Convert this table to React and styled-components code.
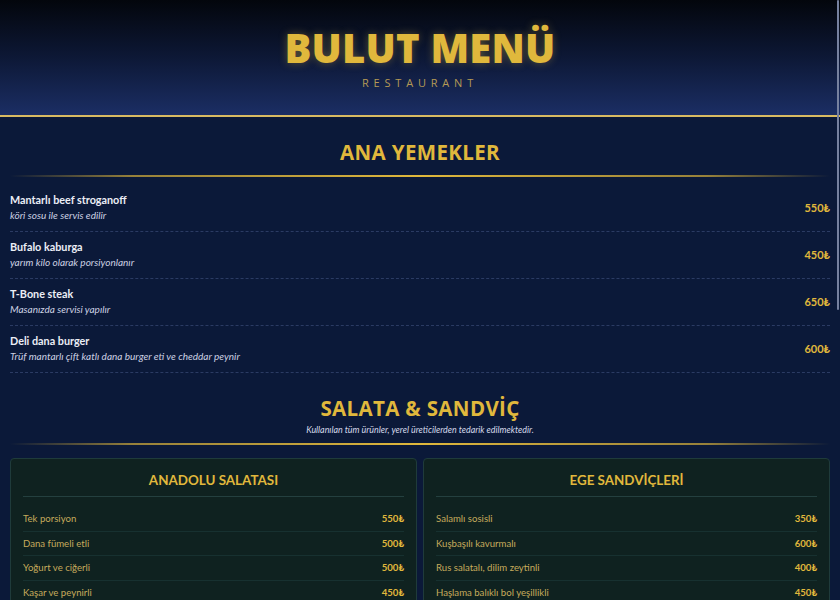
import React from 'react';
import styled, { createGlobalStyle } from 'styled-components';

const GlobalStyle = createGlobalStyle`
    html, body {
        margin: 0;
        padding: 0;
        background: #0b1939;
    }
    html { overflow: hidden; }
    * { box-sizing: border-box; }
`

const mains = [
    { name: 'Mantarlı beef stroganoff', desc: 'köri sosu ile servis edilir', price: '550₺' },
    { name: 'Bufalo kaburga', desc: 'yarım kilo olarak porsiyonlanır', price: '450₺' },
    { name: 'T-Bone steak', desc: 'Masanızda servisi yapılır', price: '650₺' },
    { name: 'Deli dana burger', desc: 'Trüf mantarlı çift katlı dana burger eti ve cheddar peynir', price: '600₺' },
];

const cards = [
    {
        title: 'ANADOLU SALATASI',
        rows: [
            ['Tek porsiyon', '550₺'],
            ['Dana fümeli etli', '500₺'],
            ['Yoğurt ve ciğerli', '500₺'],
            ['Kaşar ve peynirli', '450₺'],
            ['Ton balıklı', '550₺'],
        ],
    },
    {
        title: 'EGE SANDVİÇLERİ',
        rows: [
            ['Salamlı sosisli', '350₺'],
            ['Kuşbaşılı kavurmalı', '600₺'],
            ['Rus salatalı, dilim zeytinli', '400₺'],
            ['Haşlama balıklı bol yeşillikli', '450₺'],
            ['Hindi füme ve cheddarlı', '400₺'],
        ],
    },
];

function App() {
    return (
        <React.Fragment>
            <GlobalStyle />
            <Page>
                <Header>
                    <Logo>BULUT MENÜ</Logo>
                    <Tagline>RESTAURANT</Tagline>
                </Header>
                <Main>
                    <Section>
                        <SectionTitle>ANA YEMEKLER</SectionTitle>
                        <GoldLine />
                        <ItemList>
                            {mains.map((m) => (
                                <Item key={m.name}>
                                    <ItemText>
                                        <ItemName>{m.name}</ItemName>
                                        <ItemDesc>{m.desc}</ItemDesc>
                                    </ItemText>
                                    <Price>{m.price}</Price>
                                </Item>
                            ))}
                        </ItemList>
                    </Section>
                    <Section>
                        <SectionTitle>SALATA &amp; SANDVİÇ</SectionTitle>
                        <SectionNote>Kullanılan tüm ürünler, yerel üreticilerden tedarik edilmektedir.</SectionNote>
                        <GoldLine />
                        <CardGrid>
                            {cards.map((c) => (
                                <Card key={c.title}>
                                    <CardTitle>{c.title}</CardTitle>
                                    {c.rows.map(([n, p]) => (
                                        <CardRow key={n}>
                                            <span>{n}</span>
                                            <CardPrice>{p}</CardPrice>
                                        </CardRow>
                                    ))}
                                </Card>
                            ))}
                        </CardGrid>
                    </Section>
                    <Footer>Afiyet olsun · Bulut Menü</Footer>
                </Main>
            </Page>
            <ScrollThumb />
        </React.Fragment>
    )
}

const Page = styled.div`
    width: 840px;
    min-height: 1160px;
    background: #0b1939;
    font-family: Lato, "Noto Sans", sans-serif;
`

const Header = styled.header`
    height: 117px;
    border-bottom: 2px solid #d9bb62;
    background: linear-gradient(180deg, #03060c 0%, #0d1836 50%, #1b2e64 100%);
    display: flex;
    flex-direction: column;
    align-items: center;
    padding-top: 25px;
`

const Logo = styled.h1`
    margin: 0;
    font-family: "Open Sans", sans-serif;
    font-weight: 800;
    font-size: 40px;
    line-height: 46px;
    letter-spacing: 0.2px;
    color: #e0b83c;
    text-shadow: 0 0 8px rgba(226, 185, 59, 0.35);
`

const Tagline = styled.div`
    margin-top: 4px;
    font-family: "Open Sans", sans-serif;
    font-size: 11px;
    letter-spacing: 4.8px;
    color: #b59a55;
`

const Main = styled.main`
    padding: 0 10px;
`

const Section = styled.section`
    padding-top: 19px;
    display: flex;
    flex-direction: column;
`

const SectionTitle = styled.h2`
    margin: 0;
    text-align: center;
    font-family: "Open Sans", sans-serif;
    font-weight: 700;
    font-size: 20.5px;
    line-height: 32px;
    letter-spacing: 0.35px;
    color: #e0b83c;
`

const SectionNote = styled.div`
    text-align: center;
    font-style: italic;
    font-size: 8.9px;
    line-height: 12px;
    color: #d6d9ea;
`

const GoldLine = styled.div`
    height: 2px;
    margin: 7px 0 8px;
    background: linear-gradient(90deg, rgba(226,185,59,0) 0%, rgba(226,185,59,0.65) 15%, #e0b83c 50%, rgba(226,185,59,0.65) 85%, rgba(226,185,59,0) 100%);
`

const ItemList = styled.div`
    display: flex;
    flex-direction: column;
`

const Item = styled.div`
    display: flex;
    align-items: center;
    justify-content: space-between;
    padding: 7px 0 8px;
    border-bottom: 1px dashed #2b3b63;
`

const ItemText = styled.div`
    display: flex;
    flex-direction: column;
`

const ItemName = styled.div`
    font-weight: 700;
    font-size: 10.8px;
    line-height: 16px;
    color: #eceef6;
`

const ItemDesc = styled.div`
    font-style: italic;
    font-size: 10px;
    line-height: 15px;
    color: #cdd1e3;
`

const Price = styled.div`
    font-weight: 700;
    font-size: 11px;
    color: #e0b83c;
`

const CardGrid = styled.div`
    display: grid;
    grid-template-columns: 1fr 1fr;
    gap: 6px;
    margin-top: 5px;
`

const Card = styled.div`
    background: #0f2220;
    border: 1px solid #1f3b3b;
    border-radius: 4px;
    padding: 11px 12px 10px;
`

const CardTitle = styled.h3`
    margin: 0 0 10px;
    padding-bottom: 6px;
    border-bottom: 1px solid #24403f;
    text-align: center;
    font-weight: 700;
    font-size: 13.4px;
    line-height: 20px;
    color: #e0b83c;
`

const CardRow = styled.div`
    display: flex;
    justify-content: space-between;
    align-items: center;
    padding: 6px 0;
    font-size: 9.6px;
    line-height: 11.5px;
    color: #c6ab5c;
    border-bottom: 1px solid #173130;
    &:last-child { border-bottom: none; }
`

const CardPrice = styled.span`
    font-weight: 700;
    color: #e0b83c;
`

const Footer = styled.footer`
    margin-top: 40px;
    padding: 30px 0;
    text-align: center;
    font-size: 11px;
    color: #8d96b4;
`

const ScrollThumb = styled.div`
    position: fixed;
    top: 0;
    right: 1px;
    width: 2px;
    height: 310px;
    border-radius: 1px;
    background: #76819f;
`

export default App;
